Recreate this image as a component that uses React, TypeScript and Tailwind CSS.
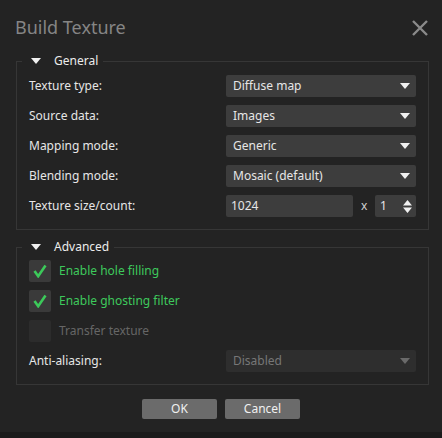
import React from "react";

const font = { fontFamily: '"Noto Sans", "Open Sans", sans-serif' };

function Caret({ dim }: { dim?: boolean }) {
  return (
    <svg width="10" height="6" viewBox="0 0 10 6" className="shrink-0">
      <path d="M0 0 H10 L5 6 Z" fill={dim ? "#6a6a6a" : "#f0f0f0"} />
    </svg>
  );
}

function Select({ value, disabled }: { value: string; disabled?: boolean }) {
  return (
    <div
      className={`flex items-center justify-between w-[190px] h-[22px] rounded-[2px] pl-[7px] pr-[6px] text-[12px] ${
        disabled ? "bg-[#2e2e2e] text-[#777]" : "bg-[#3d3d3d] text-[#e6e6e6]"
      }`}
    >
      <span>{value}</span>
      <Caret dim={disabled} />
    </div>
  );
}

function Row({ label, children }: { label: string; children: React.ReactNode }) {
  return (
    <div className="flex items-center justify-between h-[22px]">
      <span className="text-[12px] text-[#e6e6e6]">{label}</span>
      {children}
    </div>
  );
}

function Check({ label, checked, disabled }: { label: string; checked?: boolean; disabled?: boolean }) {
  return (
    <div className="flex items-center h-[22px] gap-[8px]">
      <div
        className={`w-[22px] h-[22px] rounded-[2px] flex items-center justify-center ${
          disabled ? "bg-[#2c2c2c]" : "bg-[#3a3a3a]"
        }`}
      >
        {checked && (
          <svg width="14" height="14" viewBox="0 0 14 14">
            <path d="M1.5 7 L5.2 12.2 L12.5 1.5" fill="none" stroke="#3cc95a" strokeWidth="2.6" />
          </svg>
        )}
      </div>
      <span className={`text-[12px] ${disabled ? "text-[#666]" : "text-[#3ec95c]"}`}>{label}</span>
    </div>
  );
}

function Legend({ children }: { children: React.ReactNode }) {
  return (
    <legend className="-ml-[7px] pl-[9px] pr-[5px] h-[18px] flex items-center gap-[13px] text-[12px] text-[#ececec]">
      <svg width="10" height="6" viewBox="0 0 10 6">
        <path d="M0 0 H10 L5 6 Z" fill="#f0f0f0" />
      </svg>
      <span>{children}</span>
    </legend>
  );
}

export default function App() {
  return (
    <div className="w-[442px] h-[438px] bg-[#232323] flex flex-col" style={font}>
      <div className="h-[52px] flex items-start justify-between pl-[15px] pr-[14px] pt-[15px]">
        <span className="text-[18px] leading-[24px] text-[#858585]">Build Texture</span>
        <svg width="16" height="16" viewBox="0 0 16 16" className="mt-[5px]">
          <path d="M1 1 L15 15 M15 1 L1 15" stroke="#8a8a8a" strokeWidth="2.4" />
        </svg>
      </div>

      <fieldset className="ml-[16px] w-[413px] border border-[#363636] px-[12px] pt-[5px] pb-[12px]">
        <Legend>General</Legend>
        <div className="flex flex-col gap-[8px]">
          <Row label="Texture type:">
            <Select value="Diffuse map" />
          </Row>
          <Row label="Source data:">
            <Select value="Images" />
          </Row>
          <Row label="Mapping mode:">
            <Select value="Generic" />
          </Row>
          <Row label="Blending mode:">
            <Select value="Mosaic (default)" />
          </Row>
          <Row label="Texture size/count:">
            <div className="flex items-center w-[190px]">
              <div className="w-[127px] h-[22px] bg-[#3d3d3d] rounded-[2px] pl-[5px] flex items-center text-[12px] text-[#e6e6e6]">
                1024
              </div>
              <span className="ml-[8px] w-[14px] text-[12px] text-[#d0d0d0]">x</span>
              <div className="ml-auto w-[41px] h-[22px] bg-[#3d3d3d] rounded-[2px] pl-[5px] pr-[4px] flex items-center justify-between text-[12px] text-[#e6e6e6]">
                <span>1</span>
                <svg width="9" height="13" viewBox="0 0 9 13">
                  <path d="M0 5.5 L4.5 0 L9 5.5 Z M0 7.5 H9 L4.5 13 Z" fill="#f0f0f0" />
                </svg>
              </div>
            </div>
          </Row>
        </div>
      </fieldset>

      <fieldset className="ml-[16px] mt-[8px] w-[413px] border border-[#363636] px-[12px] pt-[4px] pb-[12px]">
        <Legend>Advanced</Legend>
        <div className="flex flex-col gap-[8px]">
          <Check label="Enable hole filling" checked />
          <Check label="Enable ghosting filter" checked />
          <Check label="Transfer texture" disabled />
          <Row label="Anti-aliasing:">
            <Select value="Disabled" disabled />
          </Row>
        </div>
      </fieldset>

      <div className="flex justify-center gap-[8px] mt-[14px]">
        <button className="w-[75px] h-[20px] rounded-[2px] bg-[#6b6b6b] text-[12px] text-[#f0f0f0] flex items-center justify-center">
          OK
        </button>
        <button className="w-[75px] h-[20px] rounded-[2px] bg-[#6b6b6b] text-[12px] text-[#f0f0f0] flex items-center justify-center">
          Cancel
        </button>
      </div>

      <div className="mt-auto h-[6px] bg-[#1b1b1b]" />
    </div>
  );
}
